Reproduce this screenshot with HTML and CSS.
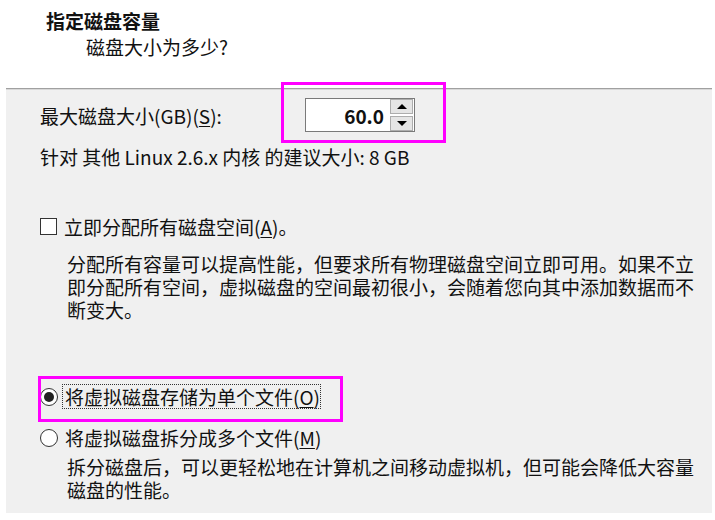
FILE: index.html
```html
<!DOCTYPE html>
<html>
<head lang="zh">
    <meta charset="UTF-8">
    <title>指定磁盘容量</title>
    <link rel="stylesheet" href="styles.css">
</head>
<body>
<div class="page">
    <div class="head">
        <h1 class="title">指定磁盘容量</h1>
        <p class="subtitle">磁盘大小为多少?</p>
    </div>

    <div class="panel">
        <div class="size-row">
            <span class="label">最大磁盘大小(GB)(<u>S</u>):</span>
            <div class="spin">
                <div class="spin-value">60.0</div>
                <div class="spin-btns">
                    <span class="spin-btn"><i class="tri up"></i></span>
                    <span class="spin-btn"><i class="tri down"></i></span>
                </div>
            </div>
        </div>
        <p class="hint">针对 其他 Linux 2.6.x 内核 的建议大小: 8 GB</p>

        <label class="check-row">
            <span class="checkbox"></span>
            <span>立即分配所有磁盘空间(<u>A</u>)。</span>
        </label>
        <p class="desc">分配所有容量可以提高性能，但要求所有物理磁盘空间立即可用。如果不立即分配所有空间，虚拟磁盘的空间最初很小，会随着您向其中添加数据而不断变大。</p>

        <label class="radio-row first">
            <span class="radio checked"></span>
            <span class="focus">将虚拟磁盘存储为单个文件(<u>O</u>)</span>
        </label>
        <label class="radio-row second">
            <span class="radio"></span>
            <span>将虚拟磁盘拆分成多个文件(<u>M</u>)</span>
        </label>
        <p class="desc last">拆分磁盘后，可以更轻松地在计算机之间移动虚拟机，但可能会降低大容量磁盘的性能。</p>
    </div>

    <!-- annotation boxes -->
    <div class="mark mark-size"></div>
    <div class="mark mark-single"></div>
</div>
</body>
</html>
```

FILE: styles.css
```css
@charset "UTF-8";
/*initial reset*/
body,h1,p{margin:0;padding:0}
body{
    background:#fff;
    color:#111;
    font:19px/23px "Noto Sans CJK SC", "Microsoft YaHei", sans-serif;
}
u{text-decoration:underline;text-underline-offset:2px}

.page{
    position:relative;
    width:715px;
    height:520px;
    overflow:hidden;
}

.head{
    padding:8px 0 0 46px;
    height:88px;
    box-sizing:border-box;
}
.title{
    font-size:19px;
    line-height:26px;
    font-weight:bold;
}
.subtitle{
    padding-left:40px;
    line-height:26px;
}

.panel{
    margin:0 3px 0 6px;
    height:425px;
    box-sizing:border-box;
    padding:9px 0 0 34px;
    background:#f0f0f0;
    border-top:1px solid #a0a0a0;
    box-shadow:inset 0 1px 0 #d8d8d8;
}

.size-row{
    display:flex;
    align-items:center;
    height:34px;
}
.label{
    width:265px;
}
.spin{
    display:flex;
    align-items:center;
    height:34px;
    width:110px;
    box-sizing:border-box;
    border:1px solid #7a7a7a;
    background:#fff;
}
.spin-value{
    flex:1;
    text-align:right;
    padding-right:6px;
    font-weight:bold;
    font-size:19px;
}
.spin-btns{
    display:flex;
    flex-direction:column;
    gap:2px;
    padding:1px 1px 1px 0;
}
.spin-btn{
    display:flex;
    align-items:center;
    justify-content:center;
    width:21px;
    height:13px;
    background:#e5e5e5;
    border:1px solid #adadad;
}
.tri{
    width:0;
    height:0;
    border-left:5px solid transparent;
    border-right:5px solid transparent;
}
.tri.up{border-bottom:5px solid #000}
.tri.down{border-top:5px solid #000}

.hint{
    margin-top:13px;
}

.check-row,.radio-row{
    display:flex;
    align-items:center;
    gap:7px;
}
.check-row{
    margin-top:47px;
}
.checkbox{
    width:17px;
    height:17px;
    box-sizing:border-box;
    border:1px solid #333;
    background:#fff;
}

.desc{
    margin-top:14px;
    padding-left:27px;
    width:635px;
}
.desc.last{
    margin-top:6px;
}

.radio-row.first{margin-top:64px}
.radio-row.second{margin-top:18px}
.radio{
    width:18px;
    height:18px;
    box-sizing:border-box;
    border:1px solid #333;
    border-radius:50%;
    background:#fff;
    position:relative;
}
.radio.checked::after{
    content:"";
    position:absolute;
    left:3px;
    top:3px;
    width:10px;
    height:10px;
    border-radius:50%;
    background:#222;
}
.focus{
    outline:1px dotted #333;
    outline-offset:0;
    margin-left:-2px;
    padding-left:2px;
}

.mark{
    position:absolute;
    border:3px solid #f0f;
    box-sizing:border-box;
}
.mark-size{
    left:281px;
    top:82px;
    width:165px;
    height:61px;
}
.mark-single{
    left:38px;
    top:376px;
    width:305px;
    height:46px;
}
```
